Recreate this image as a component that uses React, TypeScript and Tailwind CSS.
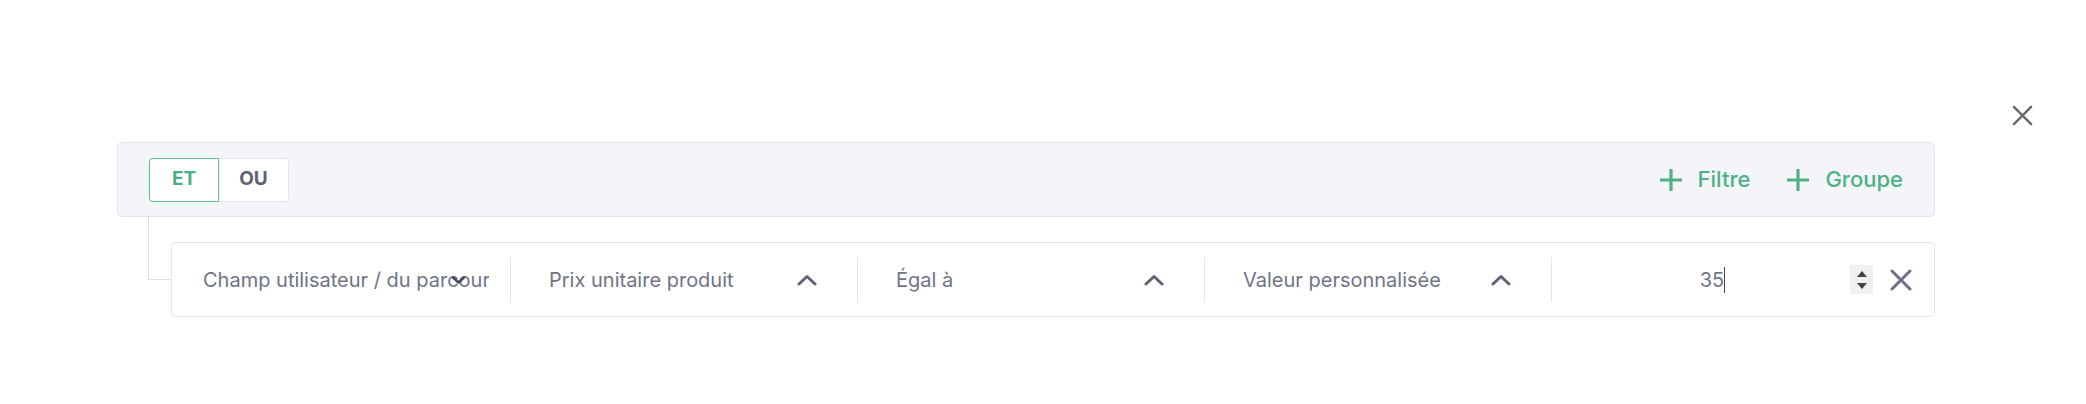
const font = { fontFamily: "Inter, 'Noto Sans', sans-serif" };

const ChevronUp = () => (
  <svg width="20" height="12" viewBox="0 0 20 12" fill="none">
    <path d="M2 10 L10 2.5 L18 10" stroke="#5f6474" strokeWidth="3" strokeLinecap="round" strokeLinejoin="round" />
  </svg>
);

const Plus = () => (
  <svg width="24" height="24" viewBox="0 0 24 24" fill="none">
    <path d="M12 1 V23 M1 12 H23" stroke="#4fb186" strokeWidth="3.2" />
  </svg>
);

const Cross = ({ size, color, width }: { size: number; color: string; width: number }) => (
  <svg width={size} height={size} viewBox="0 0 22 22" fill="none">
    <path d="M2 2 L20 20 M20 2 L2 20" stroke={color} strokeWidth={width} strokeLinecap="round" />
  </svg>
);

const Divider = () => <div className="w-px h-[45px] bg-[#e4e6eb] shrink-0" />;

const SelectCell = ({ label }: { label: string }) => (
  <div className="w-[346px] shrink-0 flex items-center justify-between pl-[38px] pr-[40px]">
    <span className="text-[20px] text-[#6f7487]">{label}</span>
    <ChevronUp />
  </div>
);

export default function App() {
  return (
    <div className="w-full h-[404px] bg-white flex items-start pt-[105px] pl-[117px] pr-[52px]" style={font}>
      <div className="w-[1819px] mt-[37px] flex flex-col">
        <div className="h-[75px] bg-[#f4f5f9] border border-[#e2e4ea] rounded-[5px] flex items-center justify-between pl-[31px] pr-[31px]">
          <div className="flex h-[44px]">
            <button className="w-[70px] h-full bg-white border-[1.5px] border-[#5cbf93] rounded-l-[4px] text-[19px] font-bold text-[#4cae84]">
              ET
            </button>
            <button className="w-[70px] h-full bg-white border border-l-0 border-[#e4e6eb] rounded-r-[4px] text-[19px] font-bold text-[#5e6275]">
              OU
            </button>
          </div>
          <div className="flex items-center gap-[36px] text-[22px] font-medium text-[#4fb186]">
            <div className="flex items-center gap-[15px]">
              <Plus />
              <span>Filtre</span>
            </div>
            <div className="flex items-center gap-[15px]">
              <Plus />
              <span>Groupe</span>
            </div>
          </div>
        </div>

        <div className="flex">
          <div className="w-[54px] shrink-0 pl-[31px]">
            <div className="h-[63px] border-l border-b border-[#dcdfe5]" />
          </div>
          <div className="flex-1 mt-[25px] h-[75px] bg-white border border-[#e2e4ea] rounded-[5px] flex items-center">
            <div className="w-[338px] shrink-0 relative flex items-center pl-[31px] pr-[21px]">
              <span className="text-[20px] text-[#6f7487] whitespace-nowrap overflow-hidden">
                Champ utilisateur / du parcours
              </span>
              <svg className="absolute right-[44px] top-1/2 -translate-y-1/2" width="15" height="10" viewBox="0 0 15 10" fill="none">
                <path d="M2 2.5 L7.5 7.5 L13 2.5" stroke="#454957" strokeWidth="2.4" strokeLinecap="round" strokeLinejoin="round" />
              </svg>
            </div>
            <Divider />
            <SelectCell label="Prix unitaire produit" />
            <Divider />
            <SelectCell label="Égal à" />
            <Divider />
            <SelectCell label="Valeur personnalisée" />
            <Divider />
            <div className="flex-1 flex items-center pr-[22px]">
              <div className="flex-1 relative flex justify-center items-center h-[29px] text-[20px] text-[#6f7487]">
                <span>35</span>
                <span className="w-px h-[26px] bg-[#454957]" />
                <div className="absolute right-0 top-0 w-[23px] h-[29px] bg-[#f0f0f0] flex flex-col items-center justify-center gap-[6px]">
                  <svg width="10" height="6" viewBox="0 0 10 6">
                    <path d="M0 6 L5 0 L10 6 Z" fill="#3f3f3f" />
                  </svg>
                  <svg width="10" height="6" viewBox="0 0 10 6">
                    <path d="M0 0 L10 0 L5 6 Z" fill="#3f3f3f" />
                  </svg>
                </div>
              </div>
              <div className="ml-[17px] flex items-center">
                <Cross size={22} color="#6a6f82" width={3} />
              </div>
            </div>
          </div>
        </div>
      </div>
      <div className="ml-[77px] w-[22px]">
        <Cross size={21} color="#6b6b6b" width={2.6} />
      </div>
    </div>
  );
}
